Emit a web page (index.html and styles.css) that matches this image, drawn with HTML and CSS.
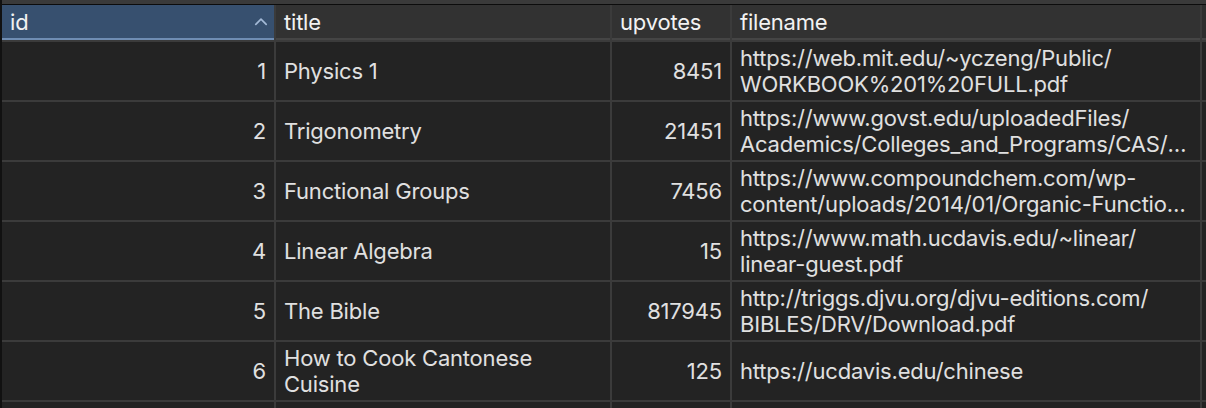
FILE: index.html
```html
<!DOCTYPE html>
<html>
<head>
<meta charset="utf-8">
<link rel="stylesheet" href="styles.css">
</head>
<body>
<div class="topband"></div>
<div class="grid">
  <div class="hcell hsel"><span>id</span><svg class="sort" width="14" height="9" viewBox="0 0 14 9"><path d="M1.8 7.4 L7 2.2 L12.2 7.4" fill="none" stroke="#a3b9d6" stroke-width="1.7" stroke-linecap="round" stroke-linejoin="round"/></svg></div>
  <div class="hcell">title</div>
  <div class="hcell">upvotes</div>
  <div class="hcell">filename</div>
  <div class="hcell hend"></div>

  <div class="cell num">1</div>
  <div class="cell"><span class="clamp">Physics 1</span></div>
  <div class="cell num">8451</div>
  <div class="cell"><div class="url"><span class="ln">https://web.mit.edu/~yczeng/Public/</span><span class="ln">WORKBOOK%201%20FULL.pdf</span></div></div>
  <div class="cell end"></div>

  <div class="cell num">2</div>
  <div class="cell"><span class="clamp">Trigonometry</span></div>
  <div class="cell num">21451</div>
  <div class="cell"><div class="url"><span class="ln">https://www.govst.edu/uploadedFiles/</span><span class="ln">Academics/Colleges_and_Programs/CAS/Trigonometry_Handbook.pdf</span></div></div>
  <div class="cell end"></div>

  <div class="cell num">3</div>
  <div class="cell"><span class="clamp">Functional Groups</span></div>
  <div class="cell num">7456</div>
  <div class="cell"><div class="url"><span class="ln">https://www.compoundchem.com/wp-</span><span class="ln">content/uploads/2014/01/Organic-Functional-Groups.pdf</span></div></div>
  <div class="cell end"></div>

  <div class="cell num">4</div>
  <div class="cell"><span class="clamp">Linear Algebra</span></div>
  <div class="cell num">15</div>
  <div class="cell"><div class="url"><span class="ln">https://www.math.ucdavis.edu/~linear/</span><span class="ln">linear-guest.pdf</span></div></div>
  <div class="cell end"></div>

  <div class="cell num">5</div>
  <div class="cell"><span class="clamp">The Bible</span></div>
  <div class="cell num">817945</div>
  <div class="cell"><div class="url"><span class="ln">http://triggs.djvu.org/djvu-editions.com/</span><span class="ln">BIBLES/DRV/Download.pdf</span></div></div>
  <div class="cell end"></div>

  <div class="cell num">6</div>
  <div class="cell"><span class="clamp">How to Cook Cantonese Cuisine</span></div>
  <div class="cell num">125</div>
  <div class="cell"><div class="url"><span class="ln">https://ucdavis.edu/chinese</span></div></div>
  <div class="cell end"></div>

  <div class="cell"></div>
  <div class="cell"></div>
  <div class="cell"></div>
  <div class="cell"></div>
  <div class="cell end"></div>
</div>
</body>
</html>
```

FILE: styles.css
```css
html, body {
  margin: 0;
  padding: 0;
  background: #232323;
  overflow: hidden;
}
body {
  font-family: Inter, "Noto Sans", "Liberation Sans", sans-serif;
  font-size: 22px;
  letter-spacing: -0.2px;
  color: #e0e0e0;
  width: 1206px;
  height: 408px;
  border-left: 2px solid #111111;
  box-sizing: border-box;
}
.topband {
  height: 4px;
  background: #3a3a3a;
  border-bottom: 1px solid #0c0c0c;
}
.grid {
  display: grid;
  grid-template-columns: 272px 334px 118px 468px 1fr;
  grid-template-rows: 35px repeat(6, 58px) 20px;
  column-gap: 2px;
  row-gap: 2px;
  background: #3b3b3b;
}
.hcell {
  background: #323232;
  color: #f2f2f2;
  border-bottom: 2px solid #454545;
  display: flex;
  align-items: center;
  padding: 0 8px;
  box-sizing: border-box;
  line-height: 1;
}
.hsel {
  background: #37506f;
  border-bottom-color: #6f8db3;
  justify-content: space-between;
  padding-right: 6px;
}
.sort {
  display: block;
}
.hend {
  background: #2e2e2e;
}
.cell {
  background: #232323;
  display: flex;
  align-items: center;
  padding: 0 8px;
  box-sizing: border-box;
  line-height: 26px;
  min-width: 0;
}
.cell.num {
  justify-content: flex-end;
}
.clamp {
  display: -webkit-box;
  -webkit-box-orient: vertical;
  -webkit-line-clamp: 2;
  overflow: hidden;
}
.url {
  display: flex;
  flex-direction: column;
  min-width: 0;
  width: 100%;
}
.ln {
  display: block;
  white-space: nowrap;
  overflow: hidden;
  text-overflow: ellipsis;
}
```
